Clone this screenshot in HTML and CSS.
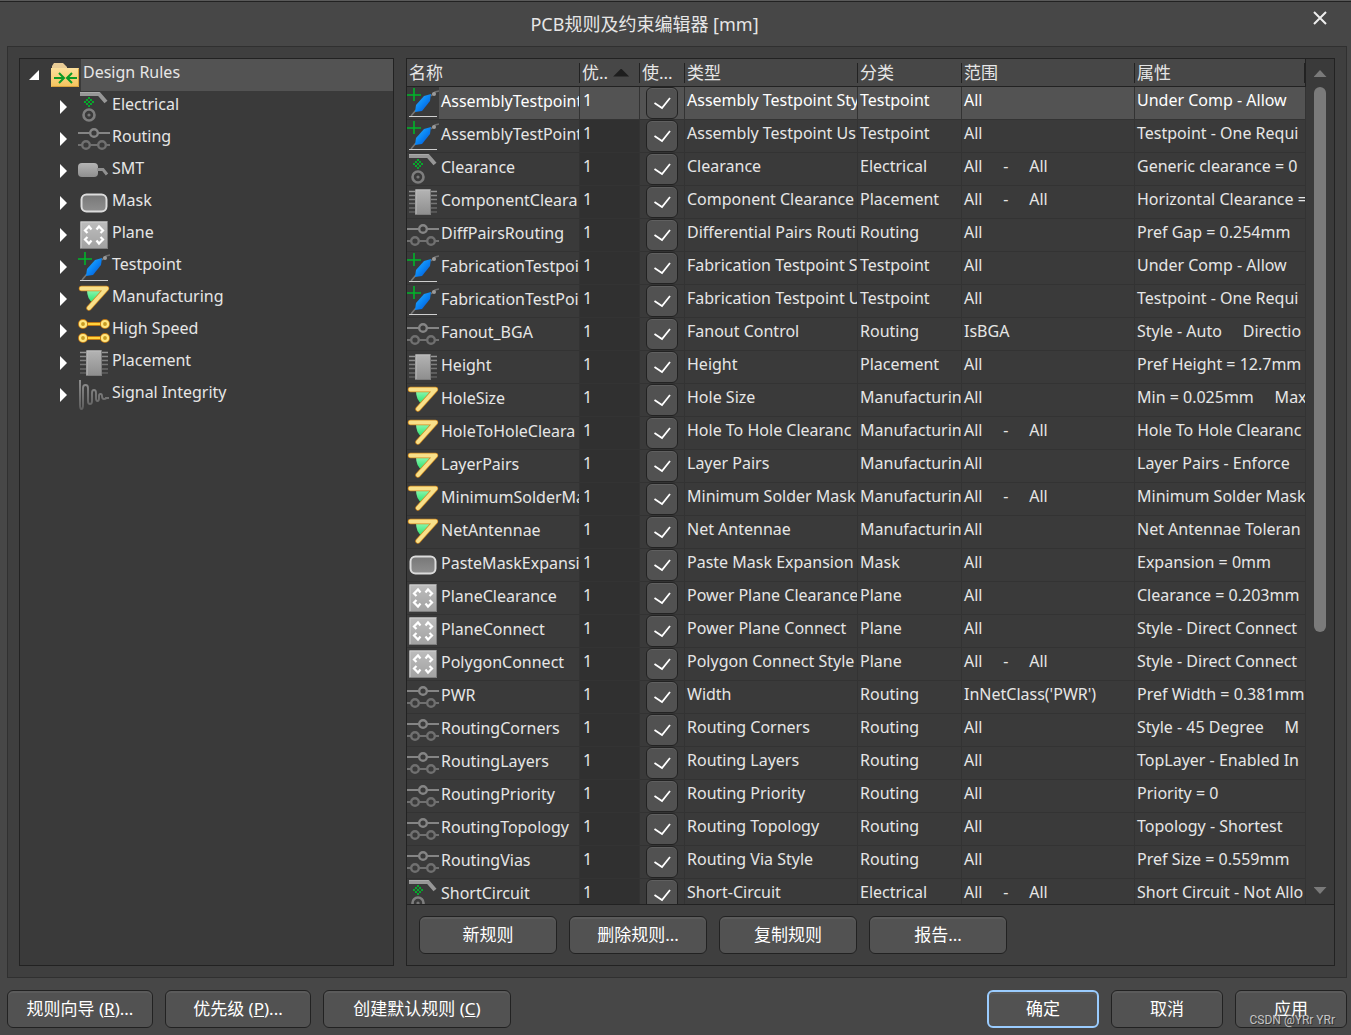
FILE: index.html
```html
<!DOCTYPE html>
<html lang="zh-CN">
<head>
<meta charset="utf-8">
<meta name="viewport" content="width=device-width, initial-scale=1">
<title>PCB规则及约束编辑器 [mm]</title>
<link rel="stylesheet" href="styles.css">
</head>
<body>
<svg class="sprite" aria-hidden="true">
  <defs>
    <linearGradient id="g-blue" x1="0" y1="0" x2="1" y2="1"><stop offset="0" stop-color="#2fb4ff"/><stop offset=".5" stop-color="#0a86f5"/><stop offset="1" stop-color="#0648c8"/></linearGradient>
    <linearGradient id="g-grey" x1="0" y1="0" x2="0" y2="1"><stop offset="0" stop-color="#b4b4b4"/><stop offset="1" stop-color="#8e8e8e"/></linearGradient>
    <linearGradient id="g-mask" x1="0" y1="0" x2="0" y2="1"><stop offset="0" stop-color="#777"/><stop offset="1" stop-color="#8f8f8f"/></linearGradient>
    <linearGradient id="g-plane" x1="0" y1="0" x2="0" y2="1"><stop offset="0" stop-color="#bdbdbd"/><stop offset="1" stop-color="#a2a2a2"/></linearGradient>
    <linearGradient id="g-folder" x1="0" y1="0" x2="0" y2="1"><stop offset="0" stop-color="#fbdf9c"/><stop offset="1" stop-color="#f5c35c"/></linearGradient>
    <linearGradient id="g-green" x1="0" y1="0" x2="0" y2="1"><stop offset="0" stop-color="#8df7b0"/><stop offset="1" stop-color="#26e06c"/></linearGradient>
    <linearGradient id="g-pins" gradientUnits="userSpaceOnUse" x1="0" y1="4" x2="0" y2="27"><stop offset="0" stop-color="#999"/><stop offset="1" stop-color="#5c5c5c"/></linearGradient>
    <linearGradient id="g-signal" gradientUnits="userSpaceOnUse" x1="0" y1="0" x2="0" y2="31"><stop offset="0" stop-color="#929292"/><stop offset="1" stop-color="#5e5e5e"/></linearGradient>
  </defs>
  <symbol id="i-folder" viewBox="0 0 32 32">
    <path d="M3 12V7l2-3h9l4 4v4z" fill="#e9cc96"/>
    <rect x="2" y="9" width="28" height="19" fill="url(#g-folder)"/>
    <path d="M2.500 27.500h27V9.500" fill="none" stroke="#d9a23c"/>
    <path d="M5 19h9M10 14l5 5-5 5M28 19h-9M23 14l-5 5 5 5" fill="none" stroke="#0b9a26" stroke-width="2"/>
  </symbol>
  <symbol id="i-electrical" viewBox="0 0 32 32">
    <path d="M2 3h19l7 8" fill="none" stroke="#979797" stroke-width="4"/>
    <path d="M2 1.500h19.500" stroke="#aaa"/>
    <g fill="#07a92c"><path d="M10 6h2v2h-2zM8 8h2v2h-2zM12 8h2v2h-2zM6 10h2v2H6zM10 10h2v2h-2zM14 10h2v2h-2zM8 12h2v2H8zM12 12h2v2h-2zM10 14h2v2h-2z"/></g>
    <circle cx="11" cy="24" r="5.500" fill="none" stroke="#7e7e7e" stroke-width="2.600"/>
    <circle cx="11" cy="24" r="1.600" fill="#777"/>
  </symbol>
  <symbol id="i-routing" viewBox="0 0 32 32">
    <g fill="none" stroke="#858585" stroke-width="1.800"><path d="M0 10h12M20 10h12"/><circle cx="16" cy="10" r="3.800" stroke-width="2.400"/></g>
    <g fill="none" stroke="#707070" stroke-width="1.800"><path d="M0 22h4M12 22h8M28 22h4"/><circle cx="8" cy="22" r="3.800" stroke-width="2.400"/><circle cx="24" cy="22" r="3.800" stroke-width="2.400"/></g>
  </symbol>
  <symbol id="i-smt" viewBox="0 0 32 32">
    <rect x="0" y="8" width="20" height="14" rx="4" fill="url(#g-grey)"/>
    <path d="M19 14.500h6l4 5" fill="none" stroke="#909090" stroke-width="3"/>
  </symbol>
  <symbol id="i-mask" viewBox="0 0 32 32">
    <rect x="3.500" y="7.500" width="25" height="17" rx="5" fill="url(#g-mask)" stroke="#dcdcdc" stroke-width="2"/>
  </symbol>
  <symbol id="i-plane" viewBox="0 0 32 32">
    <rect x="2.500" y="2.500" width="27" height="27" fill="url(#g-plane)" stroke="#7f7f7f"/>
    <path d="M3 29V3h26" fill="none" stroke="#d0d0d0"/>
    <path d="M13.500 10.500L11 7.500 7 11.500 9.500 14M18.500 10.500L21 7.500 25 11.500 22.500 14M13.500 21.500L11 24.500 7 20.500 9.500 18M18.500 21.500L21 24.500 25 20.500 22.500 18" fill="none" stroke="#fff" stroke-width="2.200"/>
  </symbol>
  <symbol id="i-testpoint" viewBox="0 0 32 32">
    <path d="M24 9l4-4 4-1" fill="none" stroke="#707070" stroke-width="1.400"/>
    <circle cx="27" cy="7" r="2" fill="#9a9a9a"/>
    <path d="M4 29l5-6" stroke="#777" stroke-width="1.600"/>
    <path d="M8 25l1-7 8-9 7-2-1 7-8 10z" fill="url(#g-blue)"/>
    <path d="M0 8h14M7 1v13" stroke="#00b52a" stroke-width="1.600"/>
    <path d="M2 29.500h28" stroke="#cfcfcf"/>
  </symbol>
  <symbol id="i-manufacturing" viewBox="0 0 32 32">
    <path d="M9 7h16l-10 13q-6-4-6-13z" fill="url(#g-green)"/>
    <path d="M3.500 5.500h25L11 25" fill="none" stroke="#d08a20" stroke-width="5.400" stroke-linecap="round" stroke-linejoin="round"/>
    <path d="M3.500 5.500h25L11 25" fill="none" stroke="#f8e08a" stroke-width="4" stroke-linecap="round" stroke-linejoin="round"/>
  </symbol>
  <symbol id="i-highspeed" viewBox="0 0 32 32">
    <path d="M5 9h22M5 23h22" stroke="#c27a14" stroke-width="4"/>
    <path d="M5 9h22M5 23h22" stroke="#ffd23c" stroke-width="2.200"/>
    <g fill="#b98a1c" stroke="#c27a14" stroke-width="4"><circle cx="5" cy="9" r="3"/><circle cx="27" cy="9" r="3"/><circle cx="5" cy="23" r="3"/><circle cx="27" cy="23" r="3"/></g>
    <g fill="#c79a22" stroke="#ffe680" stroke-width="2.200"><circle cx="5" cy="9" r="3"/><circle cx="27" cy="9" r="3"/><circle cx="5" cy="23" r="3"/><circle cx="27" cy="23" r="3"/></g>
  </symbol>
  <symbol id="i-placement" viewBox="0 0 32 32">
    <path d="M2 5.500h28M2 9.500h28M2 13.500h28M2 17.500h28M2 22h28M2 26h28" fill="none" stroke="url(#g-pins)" stroke-width="1.600"/>
    <rect x="8.500" y="3.500" width="15" height="25" fill="url(#g-grey)" stroke="#7d7d7d"/>
    <path d="M9 28V4h14" fill="none" stroke="#bebebe"/>
  </symbol>
  <symbol id="i-signal" viewBox="0 0 32 32">
    <path d="M2 1v25q0 4 1.500 4t1.500-4V9q0-3 2.500-3T10 9v13q0 3 2 3t2-3v-8q0-3 2-3t2 3v5q0 3 1.500 3t1.500-3v-2q0-2 1.500-2t1.500 2q0 3 2 3t2-1h3" fill="none" stroke="url(#g-signal)" stroke-width="1.900"/>
  </symbol>
</svg>

<div class="dialog">
  <header class="titlebar">
    <h1>PCB规则及约束编辑器 [mm]</h1>
    <button class="close" type="button" aria-label="关闭"><svg viewBox="0 0 14 14" width="14" height="14"><path d="M1 1l12 12M13 1L1 13" stroke="#eee" stroke-width="2" fill="none"/></svg></button>
  </header>

  <main class="workspace">
    <nav class="tree" aria-label="Design Rules">
      <div class="node root"><button class="toggle open" type="button" aria-label="折叠"></button><svg class="icon"><use href="#i-folder"/></svg><span class="label">Design Rules</span></div>
      <ul>
        <li class="node"><button class="toggle" type="button" aria-label="展开"></button><svg class="icon"><use href="#i-electrical"/></svg><span class="label">Electrical</span></li>
        <li class="node"><button class="toggle" type="button" aria-label="展开"></button><svg class="icon"><use href="#i-routing"/></svg><span class="label">Routing</span></li>
        <li class="node"><button class="toggle" type="button" aria-label="展开"></button><svg class="icon"><use href="#i-smt"/></svg><span class="label">SMT</span></li>
        <li class="node"><button class="toggle" type="button" aria-label="展开"></button><svg class="icon"><use href="#i-mask"/></svg><span class="label">Mask</span></li>
        <li class="node"><button class="toggle" type="button" aria-label="展开"></button><svg class="icon"><use href="#i-plane"/></svg><span class="label">Plane</span></li>
        <li class="node"><button class="toggle" type="button" aria-label="展开"></button><svg class="icon"><use href="#i-testpoint"/></svg><span class="label">Testpoint</span></li>
        <li class="node"><button class="toggle" type="button" aria-label="展开"></button><svg class="icon"><use href="#i-manufacturing"/></svg><span class="label">Manufacturing</span></li>
        <li class="node"><button class="toggle" type="button" aria-label="展开"></button><svg class="icon"><use href="#i-highspeed"/></svg><span class="label">High Speed</span></li>
        <li class="node"><button class="toggle" type="button" aria-label="展开"></button><svg class="icon"><use href="#i-placement"/></svg><span class="label">Placement</span></li>
        <li class="node"><button class="toggle" type="button" aria-label="展开"></button><svg class="icon"><use href="#i-signal"/></svg><span class="label">Signal Integrity</span></li>
      </ul>
    </nav>

    <section class="rules">
      <div class="grid">
        <div class="viewport">
          <table>
            <colgroup><col class="c-name"><col class="c-priority"><col class="c-enabled"><col class="c-type"><col class="c-category"><col class="c-scope"><col></colgroup>
            <thead><tr><th>名称</th><th><span class="sorted">优..</span></th><th>使...</th><th>类型</th><th>分类</th><th>范围</th><th>属性</th></tr></thead>
            <tbody>
              <tr class="selected"><td><div class="name"><svg class="icon"><use href="#i-testpoint"/></svg><span>AssemblyTestpoint</span></div></td><td>1</td><td><input type="checkbox" checked aria-label="AssemblyTestpoint"></td><td>Assembly Testpoint Sty</td><td>Testpoint</td><td>All</td><td>Under Comp - Allow</td></tr>
              <tr><td><div class="name"><svg class="icon"><use href="#i-testpoint"/></svg><span>AssemblyTestPoint</span></div></td><td>1</td><td><input type="checkbox" checked aria-label="AssemblyTestPoint"></td><td>Assembly Testpoint Us</td><td>Testpoint</td><td>All</td><td>Testpoint - One Requi</td></tr>
              <tr><td><div class="name"><svg class="icon"><use href="#i-electrical"/></svg><span>Clearance</span></div></td><td>1</td><td><input type="checkbox" checked aria-label="Clearance"></td><td>Clearance</td><td>Electrical</td><td>All     -     All</td><td>Generic clearance = 0</td></tr>
              <tr><td><div class="name"><svg class="icon"><use href="#i-placement"/></svg><span>ComponentCleara</span></div></td><td>1</td><td><input type="checkbox" checked aria-label="ComponentCleara"></td><td>Component Clearance</td><td>Placement</td><td>All     -     All</td><td>Horizontal Clearance =</td></tr>
              <tr><td><div class="name"><svg class="icon"><use href="#i-routing"/></svg><span>DiffPairsRouting</span></div></td><td>1</td><td><input type="checkbox" checked aria-label="DiffPairsRouting"></td><td>Differential Pairs Routi</td><td>Routing</td><td>All</td><td>Pref Gap = 0.254mm</td></tr>
              <tr><td><div class="name"><svg class="icon"><use href="#i-testpoint"/></svg><span>FabricationTestpoi</span></div></td><td>1</td><td><input type="checkbox" checked aria-label="FabricationTestpoi"></td><td>Fabrication Testpoint S</td><td>Testpoint</td><td>All</td><td>Under Comp - Allow</td></tr>
              <tr><td><div class="name"><svg class="icon"><use href="#i-testpoint"/></svg><span>FabricationTestPoi</span></div></td><td>1</td><td><input type="checkbox" checked aria-label="FabricationTestPoi"></td><td>Fabrication Testpoint U</td><td>Testpoint</td><td>All</td><td>Testpoint - One Requi</td></tr>
              <tr><td><div class="name"><svg class="icon"><use href="#i-routing"/></svg><span>Fanout_BGA</span></div></td><td>1</td><td><input type="checkbox" checked aria-label="Fanout_BGA"></td><td>Fanout Control</td><td>Routing</td><td>IsBGA</td><td>Style - Auto     Directio</td></tr>
              <tr><td><div class="name"><svg class="icon"><use href="#i-placement"/></svg><span>Height</span></div></td><td>1</td><td><input type="checkbox" checked aria-label="Height"></td><td>Height</td><td>Placement</td><td>All</td><td>Pref Height = 12.7mm</td></tr>
              <tr><td><div class="name"><svg class="icon"><use href="#i-manufacturing"/></svg><span>HoleSize</span></div></td><td>1</td><td><input type="checkbox" checked aria-label="HoleSize"></td><td>Hole Size</td><td>Manufacturin</td><td>All</td><td>Min = 0.025mm     Max</td></tr>
              <tr><td><div class="name"><svg class="icon"><use href="#i-manufacturing"/></svg><span>HoleToHoleCleara</span></div></td><td>1</td><td><input type="checkbox" checked aria-label="HoleToHoleCleara"></td><td>Hole To Hole Clearanc</td><td>Manufacturin</td><td>All     -     All</td><td>Hole To Hole Clearanc</td></tr>
              <tr><td><div class="name"><svg class="icon"><use href="#i-manufacturing"/></svg><span>LayerPairs</span></div></td><td>1</td><td><input type="checkbox" checked aria-label="LayerPairs"></td><td>Layer Pairs</td><td>Manufacturin</td><td>All</td><td>Layer Pairs - Enforce</td></tr>
              <tr><td><div class="name"><svg class="icon"><use href="#i-manufacturing"/></svg><span>MinimumSolderMa</span></div></td><td>1</td><td><input type="checkbox" checked aria-label="MinimumSolderMa"></td><td>Minimum Solder Mask</td><td>Manufacturin</td><td>All     -     All</td><td>Minimum Solder Mask</td></tr>
              <tr><td><div class="name"><svg class="icon"><use href="#i-manufacturing"/></svg><span>NetAntennae</span></div></td><td>1</td><td><input type="checkbox" checked aria-label="NetAntennae"></td><td>Net Antennae</td><td>Manufacturin</td><td>All</td><td>Net Antennae Toleran</td></tr>
              <tr><td><div class="name"><svg class="icon"><use href="#i-mask"/></svg><span>PasteMaskExpansi</span></div></td><td>1</td><td><input type="checkbox" checked aria-label="PasteMaskExpansi"></td><td>Paste Mask Expansion</td><td>Mask</td><td>All</td><td>Expansion = 0mm</td></tr>
              <tr><td><div class="name"><svg class="icon"><use href="#i-plane"/></svg><span>PlaneClearance</span></div></td><td>1</td><td><input type="checkbox" checked aria-label="PlaneClearance"></td><td>Power Plane Clearance</td><td>Plane</td><td>All</td><td>Clearance = 0.203mm</td></tr>
              <tr><td><div class="name"><svg class="icon"><use href="#i-plane"/></svg><span>PlaneConnect</span></div></td><td>1</td><td><input type="checkbox" checked aria-label="PlaneConnect"></td><td>Power Plane Connect</td><td>Plane</td><td>All</td><td>Style - Direct Connect</td></tr>
              <tr><td><div class="name"><svg class="icon"><use href="#i-plane"/></svg><span>PolygonConnect</span></div></td><td>1</td><td><input type="checkbox" checked aria-label="PolygonConnect"></td><td>Polygon Connect Style</td><td>Plane</td><td>All     -     All</td><td>Style - Direct Connect</td></tr>
              <tr><td><div class="name"><svg class="icon"><use href="#i-routing"/></svg><span>PWR</span></div></td><td>1</td><td><input type="checkbox" checked aria-label="PWR"></td><td>Width</td><td>Routing</td><td>InNetClass('PWR')</td><td>Pref Width = 0.381mm</td></tr>
              <tr><td><div class="name"><svg class="icon"><use href="#i-routing"/></svg><span>RoutingCorners</span></div></td><td>1</td><td><input type="checkbox" checked aria-label="RoutingCorners"></td><td>Routing Corners</td><td>Routing</td><td>All</td><td>Style - 45 Degree     M</td></tr>
              <tr><td><div class="name"><svg class="icon"><use href="#i-routing"/></svg><span>RoutingLayers</span></div></td><td>1</td><td><input type="checkbox" checked aria-label="RoutingLayers"></td><td>Routing Layers</td><td>Routing</td><td>All</td><td>TopLayer - Enabled In</td></tr>
              <tr><td><div class="name"><svg class="icon"><use href="#i-routing"/></svg><span>RoutingPriority</span></div></td><td>1</td><td><input type="checkbox" checked aria-label="RoutingPriority"></td><td>Routing Priority</td><td>Routing</td><td>All</td><td>Priority = 0</td></tr>
              <tr><td><div class="name"><svg class="icon"><use href="#i-routing"/></svg><span>RoutingTopology</span></div></td><td>1</td><td><input type="checkbox" checked aria-label="RoutingTopology"></td><td>Routing Topology</td><td>Routing</td><td>All</td><td>Topology - Shortest</td></tr>
              <tr><td><div class="name"><svg class="icon"><use href="#i-routing"/></svg><span>RoutingVias</span></div></td><td>1</td><td><input type="checkbox" checked aria-label="RoutingVias"></td><td>Routing Via Style</td><td>Routing</td><td>All</td><td>Pref Size = 0.559mm</td></tr>
              <tr><td><div class="name"><svg class="icon"><use href="#i-electrical"/></svg><span>ShortCircuit</span></div></td><td>1</td><td><input type="checkbox" checked aria-label="ShortCircuit"></td><td>Short-Circuit</td><td>Electrical</td><td>All     -     All</td><td>Short Circuit - Not Allo</td></tr>
            </tbody>
          </table>
        </div>
        <div class="scrollbar" aria-hidden="true"><span class="arrow up"></span><div class="track"><div class="thumb"></div></div><span class="arrow down"></span></div>
      </div>
      <div class="actions">
        <button class="btn" type="button">新规则</button>
        <button class="btn" type="button">删除规则...</button>
        <button class="btn" type="button">复制规则</button>
        <button class="btn" type="button">报告...</button>
      </div>
    </section>
  </main>

  <footer class="footer">
    <button class="btn medium" type="button">规则向导 (<u>R</u>)...</button>
    <button class="btn medium" type="button">优先级 (<u>P</u>)...</button>
    <button class="btn wide" type="button">创建默认规则 (<u>C</u>)</button>
    <span class="spacer"></span>
    <button class="btn small primary" type="button">确定</button>
    <button class="btn small" type="button">取消</button>
    <button class="btn small" type="button">应用</button>
  </footer>
  <span class="watermark">CSDN @YRr YRr</span>
</div>
</body>
</html>
```
FILE: styles.css
```css
* { box-sizing: border-box; }

body {
  margin: 0;
  background: #474747;
  color: #e6e6e6;
  font: 16px/24px "Noto Sans", "Noto Sans CJK SC", sans-serif;
}

button, input { font: inherit; color: inherit; margin: 0; padding: 0; }

.sprite { position: absolute; width: 0; height: 0; }
.icon { display: block; flex: none; width: 32px; height: 32px; }

.dialog {
  position: relative;
  display: flex;
  flex-direction: column;
  height: 100vh;
  min-height: 480px;
  border-top: 1px solid #5a5a5a;
  overflow: hidden;
}

/* Title bar */
.titlebar {
  display: grid;
  grid-template-columns: 1fr 62px;
  align-items: center;
  height: 45px;
  border-top: 1px solid #222;
}
.titlebar h1 {
  margin: 0;
  font-size: 18px;
  font-weight: 400;
  text-align: center;
}
.close {
  display: grid;
  place-items: center;
  width: 32px;
  height: 32px;
  margin: 0 15px 12px;
  border: 0;
  background: none;
}

/* Workspace */
.workspace {
  flex: 1;
  min-height: 0;
  display: flex;
  gap: 12px;
  margin: 0 4px 0 7px;
  padding: 11px;
  border: 1px solid #303030;
  background: #3f3f3f;
}

.tree {
  flex: none;
  width: 375px;
  border: 1px solid #222;
  background: #3a3a3a;
}
.tree ul { margin: 0; padding: 0 0 0 38px; list-style: none; }
.node { display: flex; height: 32px; }
.node .label { padding: 1px 2px; }
.root .label { flex: 1; background: #535353; }
.root .toggle { width: 29px; }
.toggle {
  display: flex;
  align-items: center;
  flex: none;
  width: 20px;
  border: 0;
  background: none;
}
.toggle::before {
  content: "";
  width: 7px;
  height: 14px;
  margin-left: 2px;
  background: #fff;
  clip-path: polygon(0 0, 100% 50%, 0 100%);
}
.toggle.open::before {
  width: 10px;
  height: 10px;
  margin-left: 9px;
  clip-path: polygon(100% 0, 100% 100%, 0 100%);
}

/* Rule list */
.rules {
  flex: 1;
  min-width: 0;
  display: flex;
  flex-direction: column;
  border: 1px solid #222;
}
.grid {
  flex: 1;
  min-height: 0;
  display: flex;
  border-bottom: 1px solid #222;
  background: #3a3a3a;
}
.viewport { flex: 1; min-width: 0; overflow: hidden; }

table { width: 100%; table-layout: fixed; border-collapse: separate; border-spacing: 0; }
.c-name { width: 173px; }
.c-priority { width: 60px; }
.c-enabled { width: 45px; }
.c-type { width: 173px; }
.c-category { width: 104px; }
.c-scope { width: 173px; }

th {
  height: 28px;
  padding: 0 2px;
  border-bottom: 1px solid #222;
  background: linear-gradient(#222, #222) right 4px / 1px 20px no-repeat, #474747;
  font-size: 17px;
  font-weight: 400;
  line-height: 26px;
  text-align: left;
  white-space: nowrap;
}
th:last-child { border-right: 1px solid #222; }
.sorted { display: flex; align-items: center; gap: 5px; }
.sorted::after {
  content: "";
  width: 16px;
  height: 8px;
  background: #1e1e1e;
  clip-path: polygon(50% 0, 100% 100%, 0 100%);
}

td {
  height: 33px;
  padding: 1px 0 0 2px;
  overflow: hidden;
  border-right: 1px solid #333;
  border-bottom: 1px solid #333;
  vertical-align: top;
  white-space: pre;
}
td:first-child { padding: 0; }
td:nth-child(2) { padding-left: 3px; background: #303030; }
td:nth-child(3) { padding: 0 0 0 6px; }
.name { display: flex; height: 32px; overflow: hidden; }
.name span { flex: 1; padding: 2px 0 0 2px; }
.selected td:not(:first-child), .selected .name span { background: #535353; }
.selected { color: #fff; }

input[type="checkbox"] {
  display: block;
  appearance: none;
  width: 32px;
  height: 32px;
  border: 1px solid #222;
  border-radius: 6px;
  background: #515151;
  box-shadow: inset 0 1px #606060;
}
input[type="checkbox"]:checked {
  background: url("data:image/svg+xml,%3Csvg xmlns='http://www.w3.org/2000/svg' viewBox='0 0 30 30'%3E%3Cpath d='M7.500 15l7.500 5 8-10' fill='none' stroke='white' stroke-width='1.800'/%3E%3C/svg%3E") center / 30px 30px no-repeat #515151;
}

.scrollbar {
  display: flex;
  flex-direction: column;
  align-items: center;
  flex: none;
  width: 28px;
  padding: 11px 0 10px;
}
.track { flex: 1; width: 12px; padding: 10px 0; }
.thumb { height: 69%; border-radius: 6px; background: #7a7a7a; }
.arrow { width: 13px; height: 7px; background: #7a7a7a; }
.arrow.up { clip-path: polygon(50% 0, 100% 100%, 0 100%); }
.arrow.down { clip-path: polygon(0 0, 100% 0, 50% 100%); }

/* Buttons */
.btn {
  height: 38px;
  border: 1px solid #222;
  border-radius: 6px;
  background: #525252;
  box-shadow: inset 0 2px #5b5b5b;
  color: #fff;
  font-size: 17px;
}
.actions { display: flex; gap: 12px; padding: 11px 12px; }
.actions .btn { width: 138px; }

.footer { display: flex; gap: 12px; padding: 12px 4px 7px 7px; }
.medium { width: 146px; }
.wide { width: 188px; }
.small { width: 112px; }
.spacer { flex: 1; }
.primary { border: 2px solid #9accff; }

.watermark {
  position: absolute;
  right: 16px;
  bottom: 6px;
  color: #c4c4c4;
  font: 12px/18px Roboto, sans-serif;
  text-shadow: 1px 1px #333;
  pointer-events: none;
}
```
